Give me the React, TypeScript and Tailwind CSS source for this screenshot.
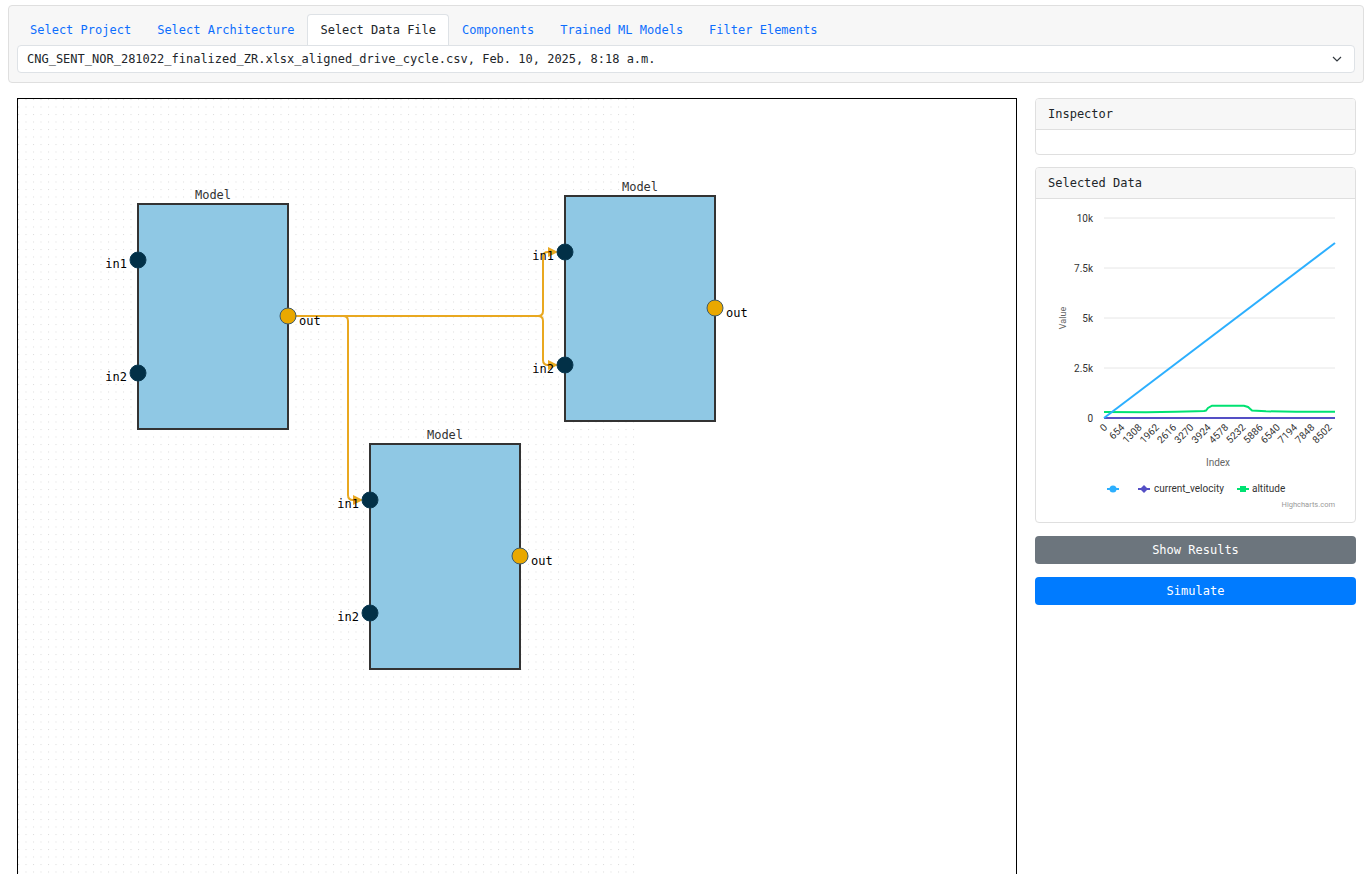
import React from 'react';

const mono = { fontFamily: '"DejaVu Sans Mono", "Liberation Mono", monospace' };
const chartFont = 'Roboto, "Liberation Sans", sans-serif';

const tabs = [
  'Select Project',
  'Select Architecture',
  'Select Data File',
  'Components',
  'Trained ML Models',
  'Filter Elements',
];

const LINK = '#e9a820';

type NodeProps = { x: number; y: number };

// one "Model" block with its three ports
const ModelNode: React.FC<NodeProps> = ({ x, y }) => {
  const w = 150;
  const h = 225;
  const in1 = y + 56;
  const in2 = y + 169;
  const out = y + 112;
  return (
    <g>
      <text x={x + w / 2} y={y - 5} textAnchor="middle" fontSize="12" fill="#333" style={mono}>
        Model
      </text>
      <rect x={x} y={y} width={w} height={h} fill="#8fc8e4" stroke="#333" strokeWidth="2" />
      <circle cx={x} cy={in1} r="8" fill="#023047" stroke="#0b3a52" />
      <circle cx={x} cy={in2} r="8" fill="#023047" stroke="#0b3a52" />
      <circle cx={x + w} cy={out} r="8" fill="#e9a800" stroke="#3d5a6a" />
      <text x={x - 11} y={in1 + 8} textAnchor="end" fontSize="12" fill="#000" style={mono}>in1</text>
      <text x={x - 11} y={in2 + 8} textAnchor="end" fontSize="12" fill="#000" style={mono}>in2</text>
      <text x={x + w + 11} y={out + 9} fontSize="12" fill="#000" style={mono}>out</text>
    </g>
  );
};

const Arrow: React.FC<{ x: number; y: number }> = ({ x, y }) => (
  <polygon points={`${x},${y} ${x - 10},${y - 5} ${x - 10},${y + 5}`} fill={LINK} />
);

const Diagram = () => (
  <svg width="998" height="800" className="block">
    <defs>
      <pattern id="dots" width="7.5" height="7.5" patternUnits="userSpaceOnUse">
        <rect x="0" y="0" width="1" height="1" fill="#dcdcdc" />
      </pattern>
    </defs>
    <rect x="0" y="0" width="618" height="800" fill="url(#dots)" />

    {/* links */}
    <g fill="none" stroke={LINK} strokeWidth="2">
      <path d="M270 217 L520 217 Q525 217 525 212 L525 158 Q525 153 530 153 L531 153" />
      <path d="M270 217 L520 217 Q525 217 525 222 L525 261 Q525 266 530 266 L531 266" />
      <path d="M270 217 L325 217 Q330 217 330 222 L330 396 Q330 401 335 401 L336 401" />
    </g>
    <Arrow x={540} y={153} />
    <Arrow x={540} y={266} />
    <Arrow x={345} y={401} />

    <ModelNode x={120} y={105} />
    <ModelNode x={547} y={97} />
    <ModelNode x={352} y={345} />
  </svg>
);

const xTicks = [0, 654, 1308, 1962, 2616, 3270, 3924, 4578, 5232, 5886, 6540, 7194, 7848, 8502];
const yTicks = [
  { label: '10k', y: 19 },
  { label: '7.5k', y: 69 },
  { label: '5k', y: 119 },
  { label: '2.5k', y: 169 },
  { label: '0', y: 219 },
];

const Chart = () => {
  const px = (i: number) => 68 + i * 0.0264;
  return (
    <svg width="319" height="323" className="block" style={{ fontFamily: chartFont }}>
      {yTicks.map((t) => (
        <g key={t.label}>
          <line x1="68" x2="299" y1={t.y} y2={t.y} stroke="#e6e6e6" />
          <text x="57" y={t.y + 4} textAnchor="end" fontSize="10" fill="#333">
            {t.label}
          </text>
        </g>
      ))}
      <text transform="translate(30 119) rotate(-90)" textAnchor="middle" fontSize="9" fill="#666">
        Value
      </text>

      {/* series */}
      <polyline
        fill="none"
        stroke="#00e272"
        strokeWidth="2"
        points="68,213 110,213.3 140,212.8 150,212.6 160,212.3 168,212 170,211.5 172,209 176,206.7 208,206.7 212,208 216,211.5 230,212.3 260,212.8 299,212.8"
      />
      <line x1="68" x2="299" y1="219" y2="219" stroke="#544fc5" strokeWidth="2" />
      <line x1="68" y1="219" x2="299" y2="44" stroke="#2caffe" strokeWidth="2" />

      {xTicks.map((v) => (
        <text
          key={v}
          transform={`translate(${px(v) + 4} 229) rotate(-45)`}
          textAnchor="end"
          fontSize="10"
          fill="#333"
        >
          {v}
        </text>
      ))}
      <text x="182" y="267" textAnchor="middle" fontSize="10" fill="#666">
        Index
      </text>

      {/* legend */}
      <g fontSize="10" fill="#333">
        <line x1="71" x2="83" y1="290" y2="290" stroke="#2caffe" strokeWidth="2" />
        <circle cx="77" cy="290" r="3.5" fill="#2caffe" />
        <line x1="102" x2="114" y1="290" y2="290" stroke="#544fc5" strokeWidth="2" />
        <polygon points="108,286 112,290 108,294 104,290" fill="#544fc5" />
        <text x="118" y="293">current_velocity</text>
        <line x1="201" x2="213" y1="290" y2="290" stroke="#00e272" strokeWidth="2" />
        <rect x="204" y="287" width="6" height="6" fill="#00e272" />
        <text x="216" y="293">altitude</text>
      </g>
      <text x="299" y="308" textAnchor="end" fontSize="7.5" fill="#999">
        Highcharts.com
      </text>
    </svg>
  );
};

const Card: React.FC<{ title: string; children?: React.ReactNode }> = ({ title, children }) => (
  <div className="border border-[#dfdfdf] rounded bg-white overflow-hidden">
    <div className="h-[31px] px-3 flex items-center bg-[#f7f7f7] border-b border-[#dfdfdf] text-[12px] text-[#212529]">
      {title}
    </div>
    {children}
  </div>
);

export default function App() {
  return (
    <div className="bg-white min-h-screen text-[12px]" style={mono}>
      <div className="pt-[5px] px-2">
        <div className="border border-[#dfdfdf] rounded bg-[#f7f7f7] px-2 pt-2 pb-[9px]">
          <div className="flex h-[31px] items-stretch">
            {tabs.map((t) => (
              <div
                key={t}
                className={
                  t === 'Select Data File'
                    ? 'px-[12px] flex items-center bg-white border border-[#dee2e6] border-b-0 rounded-t text-[#212529]'
                    : 'px-[12px] flex items-center border border-transparent text-[#0d6efd]'
                }
              >
                {t}
              </div>
            ))}
          </div>
          <div className="h-[28px] bg-white border border-[#dee2e6] rounded flex items-center justify-between pl-[9px] pr-[12px] text-[#212529]">
            <span>CNG_SENT_NOR_281022_finalized_ZR.xlsx_aligned_drive_cycle.csv, Feb. 10, 2025, 8:18 a.m.</span>
            <svg width="10" height="6" viewBox="0 0 10 6">
              <path d="M1 1 L5 5 L9 1" fill="none" stroke="#343a40" strokeWidth="1.2" />
            </svg>
          </div>
        </div>
      </div>

      <div className="flex gap-[18px] pl-[17px] pr-4 pt-[15px]">
        <div className="w-[1000px] shrink-0 border border-black overflow-hidden">
          <Diagram />
        </div>
        <div className="flex-1 flex flex-col">
          <Card title="Inspector">
            <div className="h-[24px]" />
          </Card>
          <div className="mt-3">
            <Card title="Selected Data">
              <Chart />
            </Card>
          </div>
          <button className="mt-[13px] h-[28px] rounded bg-[#6c757d] text-white text-[12px]" style={mono}>
            Show Results
          </button>
          <button className="mt-[13px] h-[28px] rounded bg-[#007bff] text-white text-[12px]" style={mono}>
            Simulate
          </button>
        </div>
      </div>
    </div>
  );
}
